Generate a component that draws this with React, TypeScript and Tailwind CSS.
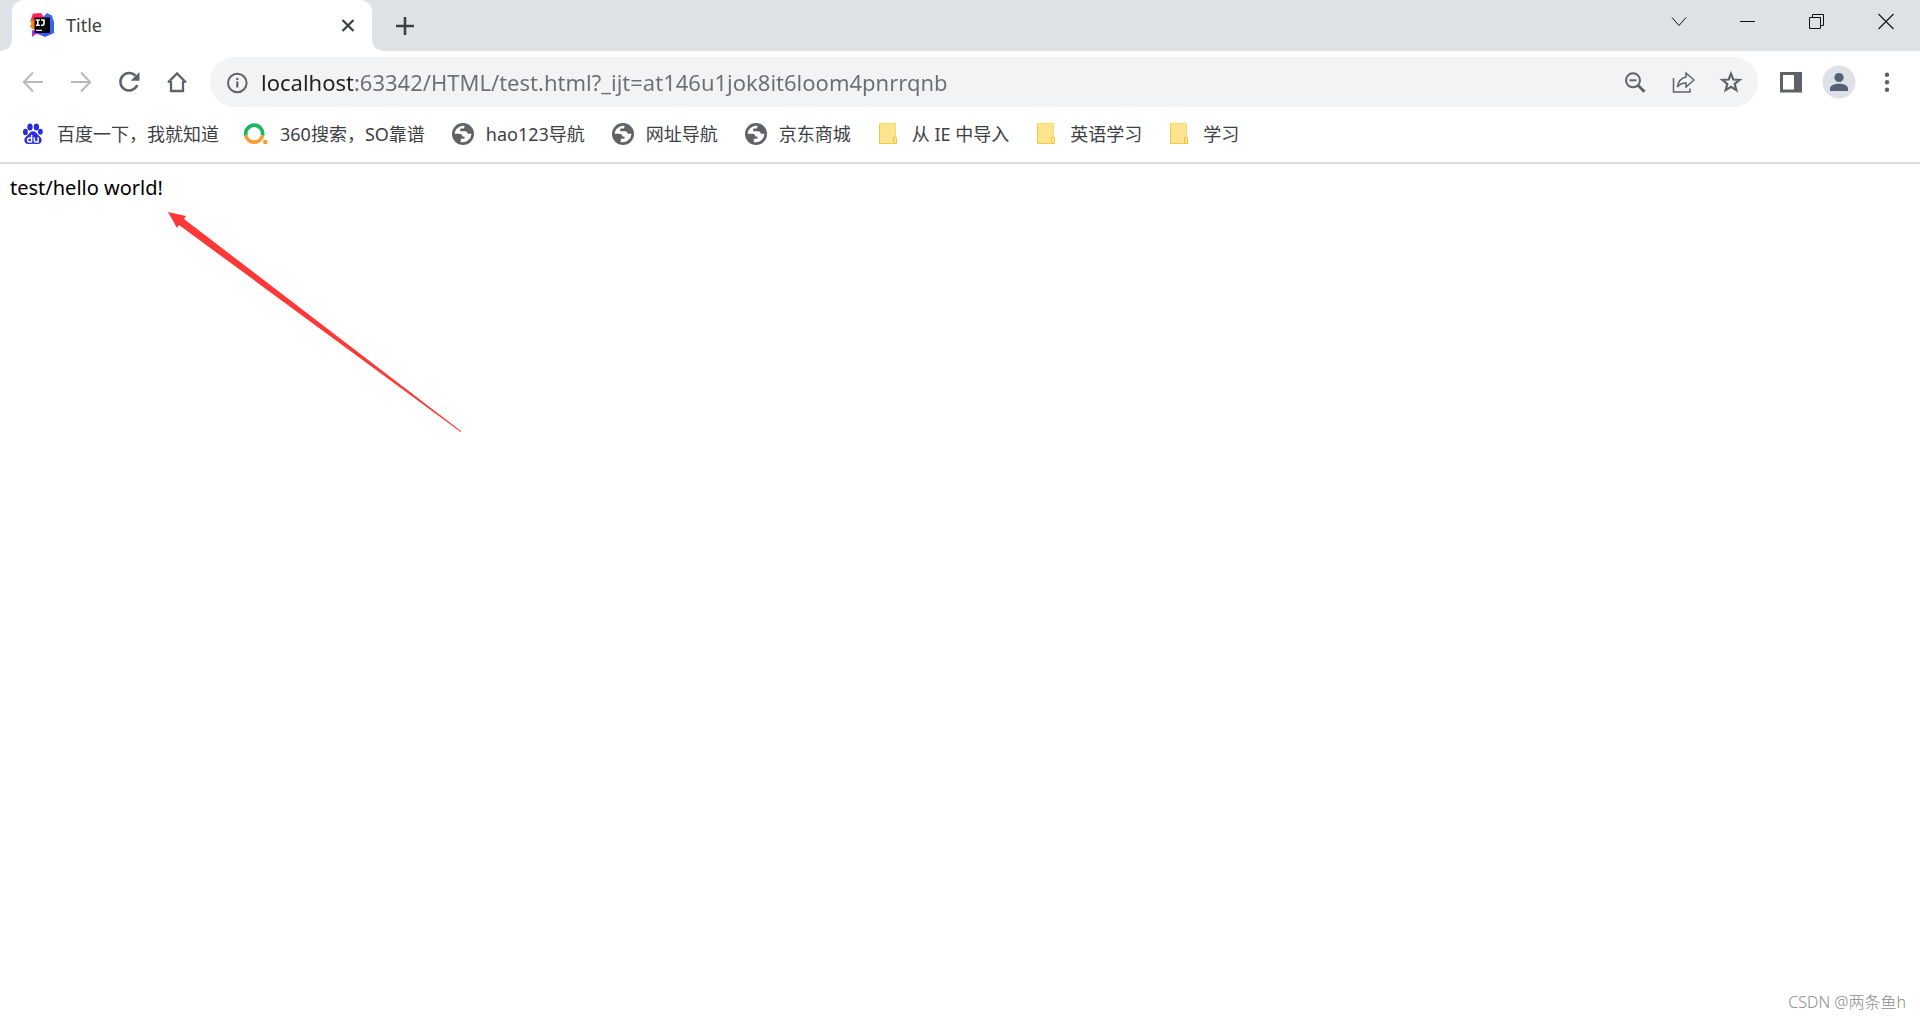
import React from 'react';

const BaiduIcon = () => (
  <svg width="24" height="24" viewBox="0 0 24 24">
    <g fill="#2a2be0">
      <ellipse cx="9" cy="5" rx="2.7" ry="3.5" />
      <ellipse cx="15.4" cy="5" rx="2.7" ry="3.5" />
      <ellipse cx="4.4" cy="10" rx="2.4" ry="3.2" />
      <ellipse cx="19.4" cy="9.8" rx="2.4" ry="3" />
      <path d="M12 9.2c2.3 0 3.2 1.8 4.6 3.2c1.6 1.6 4.2 3 4 6.2c-.2 2.7-2.2 3.6-4.3 3.5c-1.5 0-2.7-.4-4.3-.4s-2.8.4-4.3.4c-2.1.1-4.1-.8-4.3-3.5c-.2-3.2 2.4-4.6 4-6.2C8.8 11 9.7 9.2 12 9.2z" />
    </g>
    <g fill="none" stroke="#fff" strokeWidth="1.5">
      <path d="M10.6 12.8v7.2M10.6 16h-2c-1.3 0-2 .8-2 2s.7 2 2 2h2M13.3 15.3v3.2c0 1 .6 1.5 1.5 1.5h2.3v-4.7" />
    </g>
  </svg>
);

const SearchRingIcon = () => (
  <svg width="24" height="24" viewBox="0 0 24 24">
    <path d="M1.9 13.5a8.5 8.5 0 1 1 16.6 0" fill="none" stroke="#19b563" strokeWidth="3.6" />
    <path d="M1.9 13.5a8.5 8.5 0 0 0 16.6 0" fill="none" stroke="#ff9a2e" strokeWidth="3.6" />
    <circle cx="21.3" cy="20" r="2.3" fill="#ff9a2e" />
  </svg>
);

const GlobeIcon = () => (
  <svg width="24" height="24" viewBox="0 0 24 24">
    <circle cx="13" cy="12" r="11" fill="#5f6368" />
    <path
      d="M14.500 3.800C9.500 3 5 7 4.600 11.800h4.600c2.200 0 3 1 3 2.600h1.600c.7 0 .9.400.9 1.100c0 .9-.6 1.300-1.500 1.300h-2.400v3.400c5.400.9 10.400-2.900 10.600-8.400h-3.600c-.2-1.800-1-2.600-2.800-2.600h-3.600c-1 0-1.300-.5-1.300-1.300c0-1 .6-1.300 1.600-1.300h1.300c1 0 1.500-.6 1.500-2.800z"
      fill="#fff"
    />
  </svg>
);

const FolderIcon = () => (
  <svg width="24" height="24" viewBox="0 0 24 24">
    <path d="M3 1h17v14.5h1V22H3z" fill="#ffe48f" />
    <path d="M3.5 1.5h16v13M3.5 1.5v20h16" fill="none" stroke="#fbd96b" />
    <path d="M3.5 2v19.5h12" fill="none" stroke="#f0c94c" />
    <path d="M17.5 22v-5.5a1.5 1.5 0 0 1 3 0V21.5h-3" fill="#ffe48f" stroke="#eec23c" />
  </svg>
);

const IdeaIcon = () => (
  <svg width="24" height="24" viewBox="0 0 24 24">
    <defs>
      <linearGradient id="idea-blue" x1="0" y1="0" x2="0" y2="1">
        <stop offset="0" stopColor="#3b6bf0" />
        <stop offset="1" stopColor="#2f5bff" />
      </linearGradient>
      <linearGradient id="idea-pink" x1="0" y1="0" x2="0" y2="1">
        <stop offset="0" stopColor="#fe2857" />
        <stop offset="1" stopColor="#f52a7a" />
      </linearGradient>
    </defs>
    <path d="M14 3l3-3l5 2.5L24 9v11l-9 4l-7-3z" fill="url(#idea-blue)" />
    <path d="M3 .5L11 0l3 4v6H1V6z" fill="url(#idea-pink)" />
    <path d="M0 7h5v9H2l-2-3l1.5-2z" fill="#fc801d" />
    <path d="M2 17l10 2l-3 2.5L6 21l-4 3z" fill="#a63be0" />
    <path d="M4.500 4.500H20V20H4.500z" fill="#000" />
    <path d="M5.800 7h4M7.800 7v5M5.800 12.300h4M11 7h3v3.800c0 1.100-.6 1.500-1.500 1.500H11" fill="none" stroke="#fff" strokeWidth="1.6" />
    <path d="M6 17.300h6" stroke="#fff" strokeWidth="1.200" />
  </svg>
);

const bookmarks = [
  { title: '百度一下，我就知道', icon: BaiduIcon },
  { title: '360搜索，SO靠谱', icon: SearchRingIcon },
  { title: 'hao123导航', icon: GlobeIcon },
  { title: '网址导航', icon: GlobeIcon },
  { title: '京东商城', icon: GlobeIcon },
  { title: '从 IE 中导入', icon: FolderIcon },
  { title: '英语学习', icon: FolderIcon },
  { title: '学习', icon: FolderIcon },
];

const windowButtons = [
  { label: 'Search tabs', d: 'M5 8.5l7 8l7-8', width: 1 },
  { label: 'Minimize', d: 'M4 12.5h15', width: 1 },
  { label: 'Restore', d: 'M4.5 8.5h11v11h-11zM7.5 8.5v-3h11v11h-3', width: 1 },
  { label: 'Close', d: 'M4.5 5l15 15M19.5 5l-15 15', width: 1.1 },
];

type IconButtonProps = { label: string; children: React.ReactNode };

const IconButton = ({ label, children }: IconButtonProps) => (
  <button type="button" aria-label={label} className="flex h-12 w-12 shrink-0 items-center justify-center">
    <svg width="24" height="24" viewBox="0 0 24 24" fill="none" stroke="#5f6368" strokeWidth="2">
      {children}
    </svg>
  </button>
);

const TabStrip = () => (
  <header className="flex h-[51px] bg-[#dee1e6] text-[#3c4043]">
    <svg width="12" height="12" viewBox="0 0 12 12" className="shrink-0 self-end">
      <path d="M12 0v12H0C7 12 12 7 12 0z" fill="#fff" />
    </svg>
    <div className="flex w-[360px] items-center rounded-t-xl bg-white pr-3 pb-px pl-[18px]">
      <IdeaIcon />
      <span className="ml-3 flex-1 text-lg">Title</span>
      <button type="button" aria-label="Close tab" className="flex h-6 w-6 items-center justify-center">
        <svg width="24" height="24" viewBox="0 0 24 24">
          <path d="M6.5 7l11 11M17.5 7l-11 11" stroke="#3c4043" strokeWidth="2.2" />
        </svg>
      </button>
    </div>
    <svg width="12" height="12" viewBox="0 0 12 12" className="shrink-0 self-end">
      <path d="M0 0v12h12C5 12 0 7 0 0z" fill="#fff" />
    </svg>
    <button type="button" aria-label="New tab" className="flex w-[42px] items-center justify-center">
      <svg width="24" height="24" viewBox="0 0 24 24">
        <path d="M12 3v18M3 12h18" stroke="#3c4043" strokeWidth="2.6" />
      </svg>
    </button>
    <div className="ml-auto flex h-[42px]">
      {windowButtons.map((button) => (
        <button
          key={button.label}
          type="button"
          aria-label={button.label}
          className="flex w-[69px] items-center justify-center"
        >
          <svg width="24" height="24" viewBox="0 0 24 24">
            <path d={button.d} fill="none" stroke="#111" strokeWidth={button.width} />
          </svg>
        </button>
      ))}
    </div>
  </header>
);

const Toolbar = () => (
  <div className="flex items-center px-[9px] pt-1.5">
    <div className="flex opacity-45">
      <IconButton label="Back">
        <path d="M22 12H3M12 2.5L2.8 12l9.2 9.5" />
      </IconButton>
      <IconButton label="Forward">
        <path d="M2 12h19M12 2.5l9.2 9.5l-9.2 9.5" />
      </IconButton>
    </div>
    <IconButton label="Reload">
      <path d="M20.2 15a8.7 8.7 0 1 1-1.7-9.1" strokeWidth="2.5" />
      <path d="M22.5 2v8.8h-8.8z" fill="#5f6368" stroke="none" />
    </IconButton>
    <IconButton label="Home">
      <path d="M3 12.5L12 3.5l9 9M6 11v10h12V11" strokeWidth="2.3" />
    </IconButton>
    <form className="ml-[9px] flex h-[50px] flex-1 items-center rounded-full bg-[#f1f3f4] px-[3px]">
      <IconButton label="View site information">
        <circle cx="12.3" cy="13" r="9.3" />
        <path d="M12.3 11.5v6M12.3 8v2" strokeWidth="2.2" />
      </IconButton>
      {/* host part is darker than the rest of the url */}
      <input
        type="text"
        aria-label="Address bar"
        defaultValue="localhost:63342/HTML/test.html?_ijt=at146u1jok8it6loom4pnrrqnb"
        className="min-w-0 flex-1 bg-[linear-gradient(90deg,#202124_92px,#6b6f73_92px)] bg-clip-text text-[22px] text-transparent outline-none"
      />
      <IconButton label="Zoom">
        <circle cx="10" cy="10.3" r="7" />
        <path d="M6.5 10.3h7" />
        <path d="M15 15.3l6.5 6.5" strokeWidth="2.8" />
      </IconButton>
      <IconButton label="Share">
        <path d="M2.5 8v14H19v-3.5" strokeWidth="1.5" />
        <path d="M15 3l8 7l-8 7v-4c-4 0-6.5 1-8.5 4c.7-5.5 3.5-9 8.5-10z" strokeWidth="1.5" />
      </IconButton>
      <IconButton label="Bookmark this page">
        <path d="M12 3.8l2.3 5.7l6.3.4l-4.9 4l1.6 6.2L12 16.7l-5.3 3.4l1.6-6.2l-4.9-4l6.3-.4z" strokeWidth="2.2" />
      </IconButton>
    </form>
    <div className="ml-[9px] flex">
      <IconButton label="Side panel">
        <path d="M1 2h22v20.5H1zM4 5v14.5h11V5z" fill="#5f6368" fillRule="evenodd" stroke="none" />
      </IconButton>
      <button type="button" aria-label="Profile" className="flex h-12 w-12 items-center justify-center">
        <svg width="34" height="34" viewBox="0 0 34 34">
          <circle cx="17" cy="17" r="16.5" fill="#dee1e6" />
          <circle cx="17" cy="12.5" r="4.6" fill="#566178" />
          <path d="M8 26v-2.5c0-3.4 5.5-4.8 9-4.8s9 1.4 9 4.8V26z" fill="#566178" />
        </svg>
      </button>
      <IconButton label="Menu">
        <g fill="#5f6368" stroke="none">
          <circle cx="12" cy="4.8" r="2.2" />
          <circle cx="12" cy="12.3" r="2.2" />
          <circle cx="12" cy="19.8" r="2.2" />
        </g>
      </IconButton>
    </div>
  </div>
);

const BookmarksBar = () => (
  <nav className="flex h-[57px] items-center gap-[25px] border-b-2 border-[#dcdcdc] px-[21px] pb-px text-[#3c4043]">
    {bookmarks.map((bookmark) => (
      <a key={bookmark.title} href="#" className="flex items-center gap-3 text-lg whitespace-nowrap">
        <bookmark.icon />
        {bookmark.title}
      </a>
    ))}
  </nav>
);

const App = () => {
  return (
    <div className="flex min-h-screen flex-col bg-white font-['Noto_Sans','Noto_Sans_CJK_SC',sans-serif]">
      <TabStrip />
      <Toolbar />
      <BookmarksBar />
      <main className="relative flex flex-1 flex-col p-2.5">
        <p className="text-xl leading-[27px] text-black">test/hello world!</p>
        <svg width="294" height="221" viewBox="0 0 294 221" className="absolute top-12 left-[168px]">
          <path d="M0 0l18 4l-2 3l277.3 212.3l-.6.8L11 13l-2 3z" fill="#fc3838" />
        </svg>
        <footer className="mt-auto self-end pr-1 text-base leading-none font-light text-[#8c8c8c]">CSDN @两条鱼h</footer>
      </main>
    </div>
  );
};

export default App;
